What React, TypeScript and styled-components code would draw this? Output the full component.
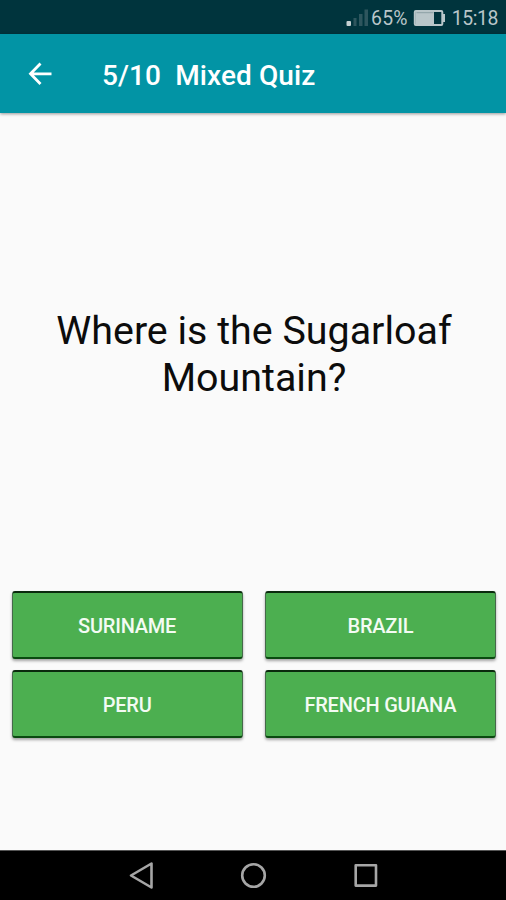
import React from "react";
import styled, { createGlobalStyle } from "styled-components";

const GlobalStyle = createGlobalStyle`
  * { box-sizing: border-box; }
  html, body { margin: 0; padding: 0; background: #fafafa; }
  body { font-family: Roboto, "Liberation Sans", sans-serif; }
`;

const Screen = styled.div`
  display: flex;
  flex-direction: column;
  width: 100%;
  height: 900px;
  overflow: hidden;
  background: #fafafa;
`;

const StatusBar = styled.div`
  display: flex;
  align-items: center;
  justify-content: flex-end;
  flex: 0 0 34px;
  padding: 3px 8px 0 0;
  background: #00343d;
  color: #b9c6c9;
  font-size: 19.4px;
  line-height: 31px;
`;

const SignalIcon = styled.svg`
  flex: none;
  width: 24px;
  height: 20px;
  margin-right: 1px;
`;

const BatteryIcon = styled.svg`
  flex: none;
  width: 33px;
  height: 18px;
  margin: 0 6px 2px 5px;
`;

const Percent = styled.span`
  letter-spacing: 0.2px;
`;

const Clock = styled.span`
  letter-spacing: -0.4px;
`;

const AppBar = styled.header`
  display: flex;
  align-items: center;
  flex: 0 0 78.5px;
  padding: 2px 0 0 24px;
  background: #0294a5;
  box-shadow: 0 1px 3px rgba(0, 0, 0, 0.4);
`;

const BackButton = styled.button`
  display: flex;
  width: 32px;
  height: 32px;
  margin-right: 46px;
  padding: 0;
  border: 0;
  background: none;
`;

const Title = styled.h1`
  margin: 0;
  padding-top: 3px;
  color: #fff;
  font-size: 28px;
  font-weight: 500;
  line-height: 33px;
  letter-spacing: 0.1px;
  white-space: pre;
`;

const Question = styled.main`
  display: flex;
  align-items: center;
  justify-content: center;
  flex: 0 0 478.5px;
  padding: 6px 39px 0 41px;
  color: #0c0c0c;
  font-size: 39.4px;
  line-height: 46.4px;
  text-align: center;
`;

const Answers = styled.section`
  display: grid;
  grid-template-columns: 1fr 1fr;
  grid-auto-rows: 68px;
  column-gap: 22px;
  row-gap: 11px;
  flex: 1;
  padding: 0 10px 0 11.5px;
`;

const Answer = styled.button`
  padding: 2px 0 0;
  border: 1px solid #45694a;
  border-top: 2px solid #0a2a0d;
  border-bottom: 2px solid #0a4a10;
  border-radius: 3px;
  background: #4caf50;
  box-shadow: 0 2px 3px rgba(0, 0, 0, 0.35);
  color: #f3fbf3;
  font-family: inherit;
  font-size: 20px;
  font-weight: 500;
  line-height: 24px;
  letter-spacing: -0.22px;
  text-transform: uppercase;
`;

const NavBar = styled.nav`
  display: flex;
  align-items: center;
  justify-content: center;
  gap: 84px;
  flex: 0 0 50px;
  padding: 0 0 2px;
  border-top: 1px solid #555;
  background: #000;
`;

const NavIcon = styled.svg`
  width: 28px;
  height: 28px;
  fill: none;
  stroke: #a6a6a6;
  stroke-width: 2.6;
  stroke-linejoin: round;
`;

const answers = ["Suriname", "Brazil", "Peru", "French Guiana"];

export default function App() {
  return (
    <>
      <GlobalStyle />
      <Screen>
        <StatusBar>
          <SignalIcon viewBox="0 0 24 20">
            <rect x="0.5" y="12" width="4.5" height="5" rx="1" fill="#c5d0d2" />
            <path d="M7.5 9h3v8h-3zM13 5h3.500v12H13zM18.500 0.500h3.500v16.500h-3.500z" fill="#2e565e" />
          </SignalIcon>
          <Percent>65%</Percent>
          <BatteryIcon viewBox="0 0 33 18">
            <rect x="1.8" y="2" width="27.5" height="14" rx="1" fill="none" stroke="#b9c6c9" strokeWidth="2" />
            <path d="M2.5 2.5h18.5v13H2.5zM30 5h2v8h-2z" fill="#b9c6c9" />
            <path d="M3.5 3.7h17" stroke="#7f9599" strokeWidth="0.8" />
          </BatteryIcon>
          <Clock>15:18</Clock>
        </StatusBar>
        <AppBar>
          <BackButton aria-label="Back">
            <svg width="32" height="32" viewBox="0 0 32 32" fill="none" stroke="#fff" strokeWidth="2.8">
              <path d="M27.5 15.8H7M16.5 5.5L6.5 15.8l10 10.3" />
            </svg>
          </BackButton>
          <Title>{"5/10  Mixed Quiz"}</Title>
        </AppBar>
        <Question>Where is the Sugarloaf Mountain?</Question>
        <Answers>
          {answers.map((name) => (
            <Answer key={name}>{name}</Answer>
          ))}
        </Answers>
        <NavBar>
          <NavIcon viewBox="0 0 28 28">
            <path d="M24.500 2.500v24L4 14.500z" />
          </NavIcon>
          <NavIcon viewBox="0 0 28 28">
            <circle cx="14.500" cy="14.500" r="11.300" />
          </NavIcon>
          <NavIcon viewBox="0 0 28 28">
            <rect x="4.700" y="4.300" width="20.300" height="20.300" />
          </NavIcon>
        </NavBar>
      </Screen>
    </>
  );
}
